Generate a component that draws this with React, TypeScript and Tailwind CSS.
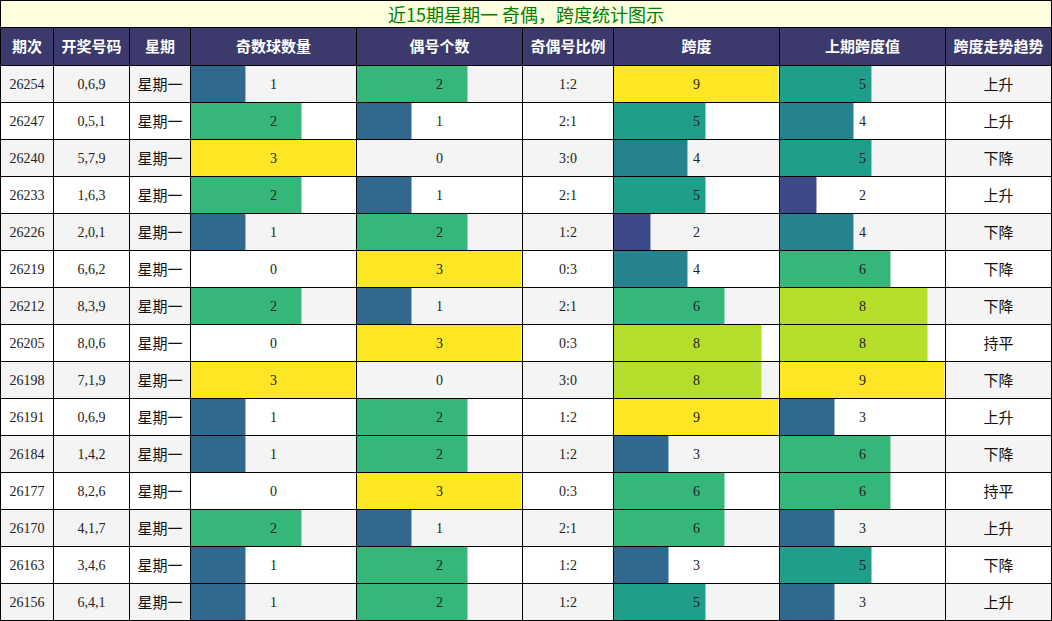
import React from "react";

type Row = [string, string, number, number, string, number, number, string];

const rows: Row[] = [
  ["26254", "0,6,9", 1, 2, "1:2", 9, 5, "上升"],
  ["26247", "0,5,1", 2, 1, "2:1", 5, 4, "上升"],
  ["26240", "5,7,9", 3, 0, "3:0", 4, 5, "下降"],
  ["26233", "1,6,3", 2, 1, "2:1", 5, 2, "上升"],
  ["26226", "2,0,1", 1, 2, "1:2", 2, 4, "下降"],
  ["26219", "6,6,2", 0, 3, "0:3", 4, 6, "下降"],
  ["26212", "8,3,9", 2, 1, "2:1", 6, 8, "下降"],
  ["26205", "8,0,6", 0, 3, "0:3", 8, 8, "持平"],
  ["26198", "7,1,9", 3, 0, "3:0", 8, 9, "下降"],
  ["26191", "0,6,9", 1, 2, "1:2", 9, 3, "上升"],
  ["26184", "1,4,2", 1, 2, "1:2", 3, 6, "下降"],
  ["26177", "8,2,6", 0, 3, "0:3", 6, 6, "持平"],
  ["26170", "4,1,7", 2, 1, "2:1", 6, 3, "上升"],
  ["26163", "3,4,6", 1, 2, "1:2", 3, 5, "下降"],
  ["26156", "6,4,1", 1, 2, "1:2", 5, 3, "上升"],
];

// viridis, keyed by value / max
const countColors: Record<number, string> = {
  1: "bg-[#31688e]",
  2: "bg-[#35b779]",
  3: "bg-[#fde725]",
};
const spanColors: Record<number, string> = {
  1: "bg-[#482878]",
  2: "bg-[#3e4989]",
  3: "bg-[#31688e]",
  4: "bg-[#26828e]",
  5: "bg-[#1f9e89]",
  6: "bg-[#35b779]",
  7: "bg-[#6ece58]",
  8: "bg-[#b5de2b]",
  9: "bg-[#fde725]",
};

const widths = ["w-[54px] border-l", "w-[76px]", "w-[61px]", "w-[166px]", "w-[166px]", "w-[91px]", "w-[166px]", "w-[166px]", "w-[106px]"];
const headers = ["期次", "开奖号码", "星期", "奇数球数量", "偶号个数", "奇偶号比例", "跨度", "上期跨度值", "跨度走势趋势"];

const serif = "font-['Liberation_Serif','Noto_Sans_CJK_SC',serif]";
const cjk = "font-['Noto_Sans_CJK_SC',sans-serif]";

function Bar({ value, max, colors }: { value: number; max: number; colors: Record<number, string> }) {
  const w = Math.min(165, Math.round((value / max) * 166));
  return (
    <div className="relative h-full w-full">
      {value > 0 && (
        <div
          className={`absolute left-0 top-0 h-full border-r border-white/50 ${colors[value]}`}
          style={{ width: w }}
        />
      )}
      <div className={`relative flex h-full items-center justify-center pt-px text-[14px] text-[#222] ${serif}`}>{value}</div>
    </div>
  );
}

export default function App() {
  return (
    <div className="w-[1052px] h-[621px] bg-white overflow-hidden">
      <div className={`h-[28px] border border-black bg-[#ffffe0] flex items-center justify-center text-[18px] text-[#008000] ${cjk}`}>
        近15期星期一 奇偶，跨度统计图示
      </div>
      <div className="flex h-[38px] bg-[#3c3a6c]">
        {headers.map((h, i) => (
          <div key={h} className={`${widths[i]} shrink-0 border-r border-b border-black flex items-center justify-center text-white text-[15px] font-bold ${cjk}`}>
            {h}
          </div>
        ))}
      </div>
      {rows.map((r, ri) => {
        const bg = ri % 2 === 0 ? "bg-[#f4f4f4]" : "bg-white";
        return (
          <div key={r[0]} className={`flex h-[37px] ${bg}`}>
            <div className={`${widths[0]} shrink-0 border-r border-b border-black flex items-center justify-center pt-px text-[14px] text-[#222] ${serif}`}>{r[0]}</div>
            <div className={`${widths[1]} shrink-0 border-r border-b border-black flex items-center justify-center pt-px text-[14px] text-[#222] ${serif}`}>{r[1]}</div>
            <div className={`${widths[2]} shrink-0 border-r border-b border-black flex items-center justify-center pt-px text-[15px] text-[#111] ${cjk}`}>星期一</div>
            <div className={`${widths[3]} shrink-0 border-r border-b border-black`}>
              <Bar value={r[2]} max={3} colors={countColors} />
            </div>
            <div className={`${widths[4]} shrink-0 border-r border-b border-black`}>
              <Bar value={r[3]} max={3} colors={countColors} />
            </div>
            <div className={`${widths[5]} shrink-0 border-r border-b border-black flex items-center justify-center pt-px text-[14px] text-[#222] ${serif}`}>{r[4]}</div>
            <div className={`${widths[6]} shrink-0 border-r border-b border-black`}>
              <Bar value={r[5]} max={9} colors={spanColors} />
            </div>
            <div className={`${widths[7]} shrink-0 border-r border-b border-black`}>
              <Bar value={r[6]} max={9} colors={spanColors} />
            </div>
            <div className={`${widths[8]} shrink-0 border-r border-b border-black flex items-center justify-center pt-px text-[15px] text-[#111] ${cjk}`}>{r[7]}</div>
          </div>
        );
      })}
    </div>
  );
}
